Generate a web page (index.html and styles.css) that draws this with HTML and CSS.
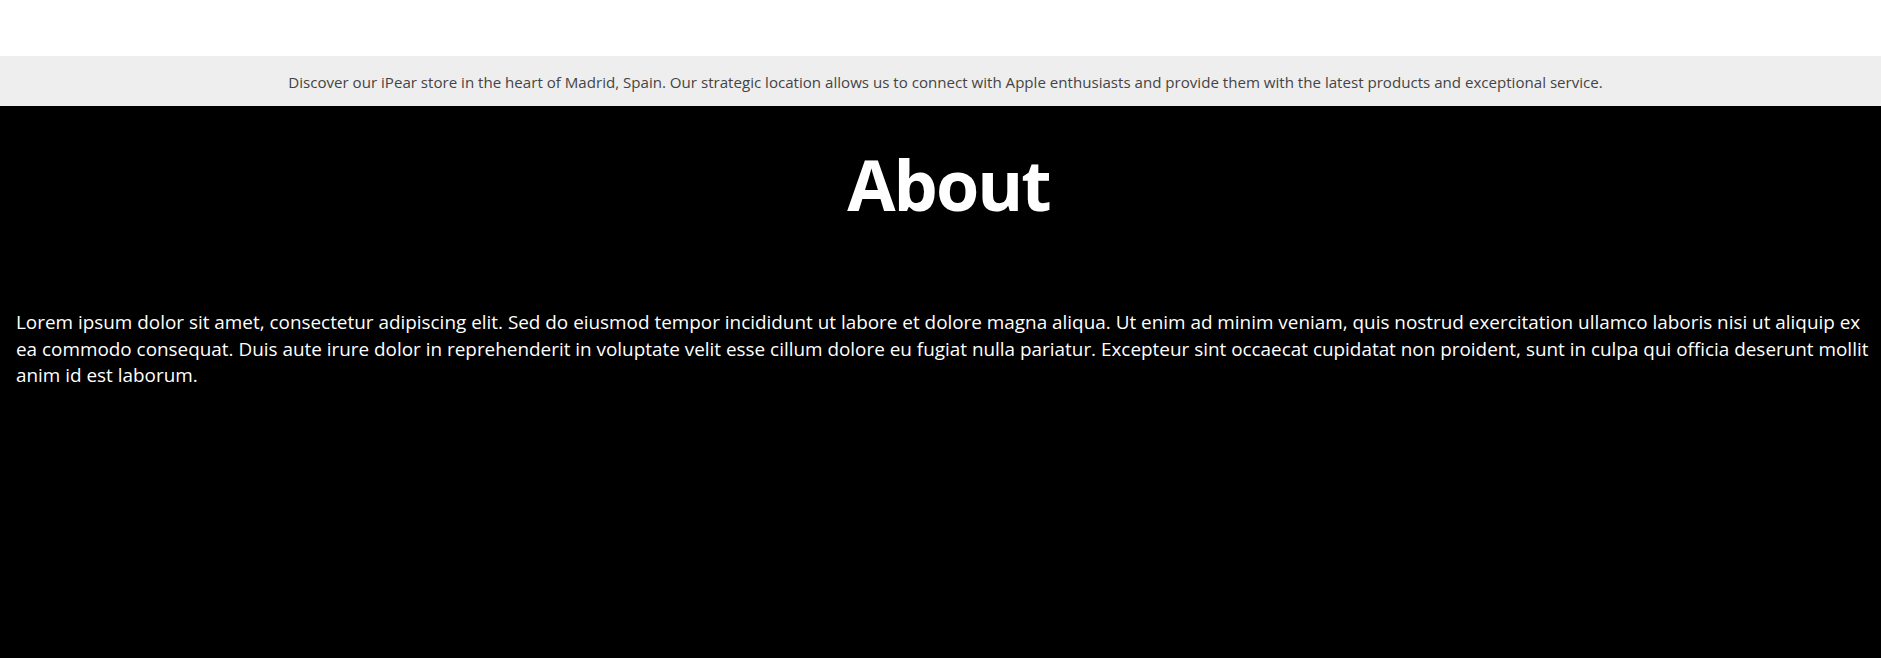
FILE: index.html
```html
<!DOCTYPE html>
<html lang="en">
<head>
<meta charset="utf-8">
<title>About - iPear</title>
<link rel="stylesheet" href="styles.css">
</head>
<body>
<header class="topbar"></header>
<div class="banner">
  <p class="banner-text">Discover our iPear store in the heart of Madrid, Spain. Our strategic location allows us to connect with Apple enthusiasts and provide them with the latest products and exceptional service.</p>
</div>
<main class="about">
  <h1 class="about-title">About</h1>
  <p class="about-text">Lorem ipsum dolor sit amet, consectetur adipiscing elit. Sed do eiusmod tempor incididunt ut labore et dolore magna aliqua. Ut enim ad minim veniam, quis nostrud exercitation ullamco laboris nisi ut aliquip ex ea commodo consequat. Duis aute irure dolor in reprehenderit in voluptate velit esse cillum dolore eu fugiat nulla pariatur. Excepteur sint occaecat cupidatat non proident, sunt in culpa qui officia deserunt mollit anim id est laborum.</p>
</main>
</body>
</html>
```
FILE: styles.css
```css
html, body {
  margin: 0;
  padding: 0;
  height: 100%;
}

body {
  display: flex;
  flex-direction: column;
  font-family: "Open Sans", "Noto Sans", sans-serif;
  background: #000;
}

.topbar {
  height: 56px;
  background: #fff;
  flex: none;
}

.banner {
  height: 50px;
  flex: none;
  background: #eeeeee;
  display: flex;
  align-items: center;
  justify-content: center;
  padding-left: 10px;
}

.banner-text {
  margin: 0;
  font-size: 15.1px;
  line-height: 22px;
  color: #444;
  padding-top: 2px;
}

.about {
  flex: 1;
  background: #000;
  color: #fff;
  padding: 42px 8px 0 16px;
}

.about-title {
  margin: 0 0 0 8px;
  text-align: center;
  font-size: 70px;
  line-height: 72px;
  font-weight: 700;
  letter-spacing: -2px;
}

.about-text {
  margin: 89px 0 0;
  font-size: 18.9px;
  line-height: 26.67px;
}
```
